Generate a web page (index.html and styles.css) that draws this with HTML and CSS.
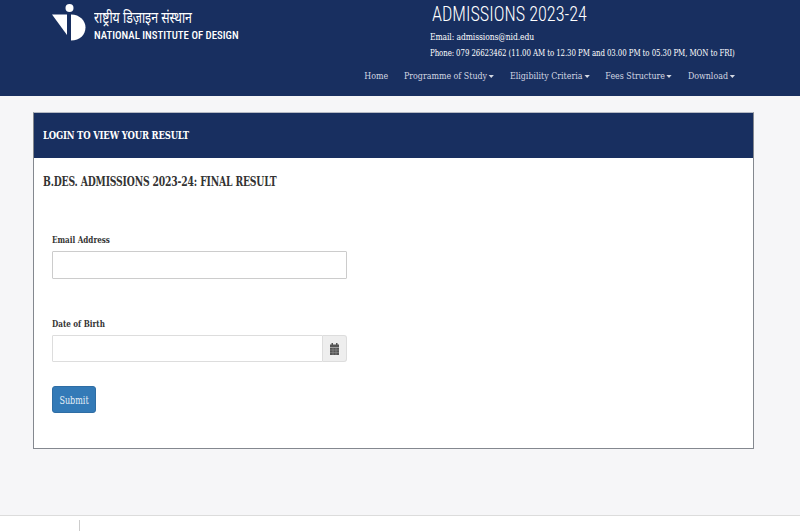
FILE: index.html
```html
<!DOCTYPE html>
<html>
<head>
<meta charset="utf-8">
<title>NID Admissions 2023-24</title>
<link rel="stylesheet" href="styles.css">
</head>
<body>

<div class="header">
  <div class="brand">
    <svg class="logo" viewBox="0 0 34 38" width="34" height="38">
      <circle cx="17.500" cy="5" r="4" fill="#fff"/>
      <polygon points="0,11.500 15,11.500 15,32" fill="#fff"/>
      <path d="M19 11.500 C28 11.500 33.500 18 33.500 24.500 C33.500 31.500 28 37.500 19 37.500 Z" fill="#fff"/>
    </svg>
    <div class="brand-text">
      <div class="brand-hindi">राष्ट्रीय डिज़ाइन संस्थान</div>
      <div class="brand-english">NATIONAL INSTITUTE OF DESIGN</div>
    </div>
  </div>
  <div class="header-right">
    <div class="admissions">ADMISSIONS 2023-24</div>
    <div class="contact contact-email">Email: admissions@nid.edu</div>
    <div class="contact contact-phone">Phone: 079 26623462 (11.00 AM to 12.30 PM and 03.00 PM to 05.30 PM, MON to FRI)</div>
    <div class="nav">
      <a href="#">Home</a>
      <a href="#">Programme of Study<span class="caret"></span></a>
      <a href="#">Eligibility Criteria<span class="caret"></span></a>
      <a href="#">Fees Structure<span class="caret"></span></a>
      <a href="#">Download<span class="caret"></span></a>
    </div>
  </div>
</div>

<div class="main">
  <div class="card">
    <div class="card-head"><span class="card-title">LOGIN TO VIEW YOUR RESULT</span></div>
    <div class="card-body">
      <h2>B.DES. ADMISSIONS 2023-24: FINAL RESULT</h2>
      <form class="login">
        <div class="field">
          <label for="email">Email Address</label>
          <input type="text" id="email">
        </div>
        <div class="field">
          <label for="dob">Date of Birth</label>
          <div class="input-group">
            <input type="text" id="dob">
            <span class="addon">
              <svg viewBox="0 0 9 12" width="9" height="12">
                <rect x="1.500" y="0" width="1.500" height="2" fill="#555"/>
                <rect x="6" y="0" width="1.500" height="2" fill="#555"/>
                <rect x="0" y="1.500" width="9" height="2.500" fill="#555"/>
                <rect x="0" y="4.500" width="9" height="7.500" fill="#555"/>
                <path d="M0 7H9M0 9.500H9M3 4.500V12M6 4.500V12" stroke="#999" stroke-width=".5"/>
              </svg>
            </span>
          </div>
        </div>
        <button type="button" class="submit"><span class="submit-text">Submit</span></button>
      </form>
    </div>
  </div>
</div>

<div class="footer">
  <div class="footer-cell"></div>
</div>

</body>
</html>
```

FILE: styles.css
```css
body {
  font-family: "DejaVu Serif", serif;
  font-stretch: condensed;
  margin: 0;
  padding: 0;
  background-color: #f6f6f8;
  height: 531px;
  overflow: hidden;
  display: flex;
  flex-direction: column;
}

.header {
  height: 96px;
  background-color: #182f60;
  color: #fff;
  display: flex;
  justify-content: space-between;
  flex-shrink: 0;
}

.brand {
  display: flex;
  align-items: flex-start;
  padding: 3px 0 0 52px;
}

.logo {
  margin-right: 8px;
}

.brand-text {
  padding-top: 4px;
}

.brand-hindi {
  font-family: "Noto Sans", "Liberation Sans", sans-serif;
  font-size: 16px;
  line-height: 21px;
  color: #fff;
  transform: scaleX(.77);
  transform-origin: left top;
}

.brand-english {
  font-family: Roboto, sans-serif;
  font-size: 11.500px;
  font-weight: 500;
  line-height: 14px;
  white-space: nowrap;
  transform: scaleX(.94);
  transform-origin: left top;
}

.header-right {
  width: 370px;
  box-sizing: border-box;
  white-space: nowrap;
}

.admissions {
  font-family: Roboto, sans-serif;
  font-weight: 300;
  font-size: 20px;
  line-height: 24px;
  margin: 2px 0 0 2px;
  transform: scaleX(.91);
  transform-origin: left top;
}

.contact {
  font-size: 9.500px;
  line-height: 16px;
  color: #fff;
  letter-spacing: -.1px;
  transform-origin: left top;
}

.contact-email {
  margin-top: 3px;
  transform: scaleX(.89);
}

.contact-phone {
  transform: scaleX(.82);
}

.nav {
  display: flex;
  justify-content: flex-end;
  gap: 18px;
  margin: 7px 65px 0 0;
  transform: scaleX(.88);
  transform-origin: right top;
}

.nav a {
  color: #d4d8e2;
  font-size: 10px;
  line-height: 16px;
  text-decoration: none;
}

.caret {
  display: inline-block;
  margin-left: 2px;
  vertical-align: middle;
  border-top: 3px solid #d4d8e2;
  border-left: 3px solid transparent;
  border-right: 3px solid transparent;
}

.main {
  flex: 1;
  padding: 16px 46px 0 33px;
}

.card {
  height: 337px;
  box-sizing: border-box;
  background-color: #fff;
  border: 1px solid #84888f;
  border-top-color: #b5bac4;
}

.card-head {
  height: 45px;
  background-color: #182f60;
  color: #fff;
  font-size: 11px;
  font-weight: bold;
  line-height: 45px;
  padding-left: 9px;
  letter-spacing: -.2px;
}

.card-title {
  display: block;
  transform: scaleX(.854);
  transform-origin: left top;
}

.card-body {
  padding: 16px 9px 0;
}

.card-body h2 {
  margin: 0;
  font-size: 13px;
  font-weight: bold;
  line-height: 16px;
  color: #333;
  letter-spacing: -.2px;
  white-space: nowrap;
  transform: scaleX(.79);
  transform-origin: left top;
}

.login {
  width: 295px;
  padding: 43px 0 0 9px;
}

.field {
  margin-bottom: 38px;
}

.field label {
  display: block;
  font-size: 10px;
  font-weight: bold;
  line-height: 14px;
  color: #333;
  margin-bottom: 4px;
  transform: scaleX(.8);
  transform-origin: left top;
}

.field input {
  display: block;
  width: 100%;
  height: 28px;
  box-sizing: border-box;
  border: 1px solid #ccc;
  border-radius: 1px;
  background-color: #fff;
  padding: 0 8px;
}

.input-group {
  display: flex;
}

.input-group input {
  flex: 1;
  width: auto;
  height: 27px;
  min-width: 0;
  border-radius: 1px 0 0 1px;
  border-color: #ddd;
}

.addon {
  width: 23px;
  display: flex;
  align-items: center;
  justify-content: center;
  background-color: #eee;
  border: 1px solid #ddd;
  border-left: none;
  border-radius: 0 3px 3px 0;
}

.submit {
  display: block;
  width: 44px;
  height: 27px;
  padding: 0;
  margin-top: -14px;
  background-color: #337ab7;
  color: #e8f0f8;
  border: 1px solid #2e6da4;
  border-radius: 3px;
  font-family: inherit;
  font-stretch: inherit;
  font-size: 10.500px;
}

.submit-text {
  display: block;
  transform: scaleX(.85);
}

.footer {
  height: 16px;
  flex-shrink: 0;
  box-sizing: border-box;
  background-color: #fff;
  border-top: 1px solid #dcdcdc;
  padding-top: 4px;
}

.footer-cell {
  width: 80px;
  height: 11px;
  box-sizing: border-box;
  border-right: 1px solid #ccc;
}
```
